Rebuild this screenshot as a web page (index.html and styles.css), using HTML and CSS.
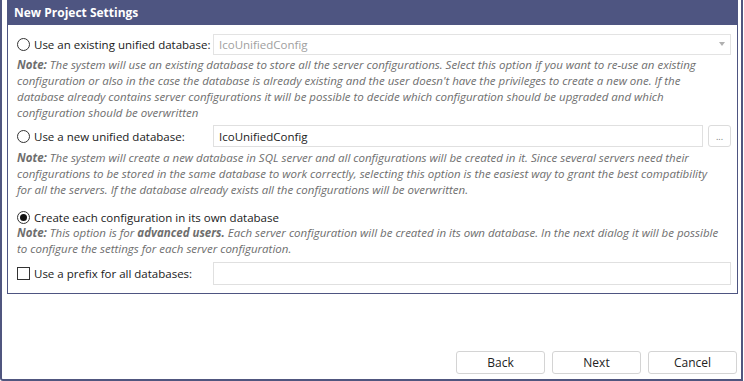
FILE: index.html
```html
<!DOCTYPE html>
<html>
<head>
<meta charset="utf-8">
<link rel="stylesheet" href="styles.css">
</head>
<body>
<div class="window">
  <div class="group">
    <div class="group-title">New Project Settings</div>
    <div class="group-body">
      <div class="row row1">
        <label class="opt"><span class="radio"></span><span>Use an existing unified database:</span></label>
        <div class="combo disabled"><span>IcoUnifiedConfig</span><span class="arrow"></span></div>
      </div>
      <div class="note n1"><b>Note:</b> The system will use an existing database to store all the server configurations. Select this option if you want to re-use an existing<br>configuration or also in the case the database is already existing and the user doesn't have the privileges to create a new one. If the<br>database already contains server configurations it will be possible to decide which configuration should be upgraded and which<br>configuration should be overwritten</div>
      <div class="row row2">
        <label class="opt"><span class="radio"></span><span>Use a new unified database:</span></label>
        <div class="field"><div class="textbox"><span>IcoUnifiedConfig</span></div><div class="dots">...</div></div>
      </div>
      <div class="note n2"><b>Note:</b> The system will create a new database in SQL server and all configurations will be created in it. Since several servers need their<br>configurations to be stored in the same database to work correctly, selecting this option is the easiest way to grant the best compatibility<br>for all the servers. If the database already exists all the configurations will be overwritten.</div>
      <div class="row row3">
        <label class="opt"><span class="radio checked"></span><span>Create each configuration in its own database</span></label>
      </div>
      <div class="note n3"><b>Note:</b> This option is for <b>advanced users.</b> Each server configuration will be created in its own database. In the next dialog it will be possible<br>to configure the settings for each server configuration.</div>
      <div class="row row4">
        <label class="opt"><span class="check"></span><span>Use a prefix for all databases:</span></label>
        <div class="textbox wide"></div>
      </div>
    </div>
  </div>
  <div class="buttons">
    <button class="btn">Back</button>
    <button class="btn">Next</button>
    <button class="btn">Cancel</button>
  </div>
</div>
</body>
</html>
```

FILE: styles.css
```css
html, body {
  margin: 0;
  padding: 0;
  background: #ffffff;
}
body {
  font-family: "Open Sans", "Noto Sans", sans-serif;
  font-size: 11.5px;
  color: #1a1a1a;
}
.window {
  box-sizing: border-box;
  width: 743px;
  height: 381px;
  border-left: 2px solid #50567f;
  border-right: 2px solid #50567f;
  border-bottom: 2px solid #50567f;
  border-bottom-left-radius: 3px;
  display: flex;
  flex-direction: column;
  padding-left: 5px;
}
.group {
  box-sizing: border-box;
  width: 731px;
  height: 294px;
  border: 1px solid #4e5581;
  border-top: none;
}
.group-title {
  height: 25px;
  background: #4e5581;
  color: #ffffff;
  font-weight: 700;
  font-size: 12px;
  line-height: 25px;
  padding-left: 7px;
  margin: 0 -1px;
}
.group-body {
  padding: 8px 6px 0 9px;
}
.row {
  display: flex;
  align-items: center;
  height: 22px;
}
.opt {
  width: 196px;
  display: flex;
  align-items: center;
  gap: 4px;
  white-space: nowrap;
}
.radio {
  box-sizing: border-box;
  width: 13px;
  height: 13px;
  border: 1px solid #333;
  border-radius: 50%;
  background: #fff;
  position: relative;
  flex: none;
}
.radio.checked::after {
  content: "";
  position: absolute;
  left: 2px;
  top: 2px;
  width: 7px;
  height: 7px;
  border-radius: 50%;
  background: #111;
}
.check {
  box-sizing: border-box;
  width: 13px;
  height: 13px;
  border: 1px solid #333;
  background: #fff;
  flex: none;
}
.combo {
  box-sizing: border-box;
  flex: 1;
  height: 21px;
  border: 1px solid #e3e3e3;
  display: flex;
  align-items: center;
  justify-content: space-between;
  padding: 0 5px 0 5px;
  color: #a0a0a0;
}
.arrow {
  width: 0;
  height: 0;
  border-left: 3.5px solid transparent;
  border-right: 3.5px solid transparent;
  border-top: 4px solid #b0b0b0;
}
.field {
  flex: 1;
  display: flex;
  gap: 5px;
}
.textbox {
  box-sizing: border-box;
  flex: 1;
  height: 22px;
  border: 1px solid #e0e0e0;
  display: flex;
  align-items: center;
  padding-left: 5px;
  color: #222;
}
.textbox.wide {
  height: 23px;
}
.dots {
  box-sizing: border-box;
  width: 23px;
  height: 22px;
  border: 1px solid #dcdcdc;
  border-radius: 3px;
  color: #777;
  font-size: 9px;
  display: flex;
  align-items: center;
  justify-content: center;
}
.note {
  font-style: italic;
  color: #6e6e6e;
  font-size: 11.5px;
  line-height: 16px;
  white-space: nowrap;
  margin-top: 2px;
  padding-left: 0;
}
.note b {
  font-weight: 700;
  color: #6e6e6e;
}
.row2 { margin-top: 4px; }
.n2 { margin-top: 3px; }
.row3 { margin-top: 8px; }
.n3 { margin-top: -3px; }
.row4 { margin-top: 5px; }
.buttons {
  margin-top: auto;
  display: flex;
  justify-content: flex-end;
  gap: 7px;
  padding: 0 4px 5px 0;
}
.btn {
  box-sizing: border-box;
  width: 89px;
  height: 23px;
  border: 1px solid #d4d4d4;
  border-radius: 3px;
  background: #ffffff;
  font-family: "Open Sans", "Noto Sans", sans-serif;
  font-size: 12px;
  color: #222;
  padding: 0;
}
```
